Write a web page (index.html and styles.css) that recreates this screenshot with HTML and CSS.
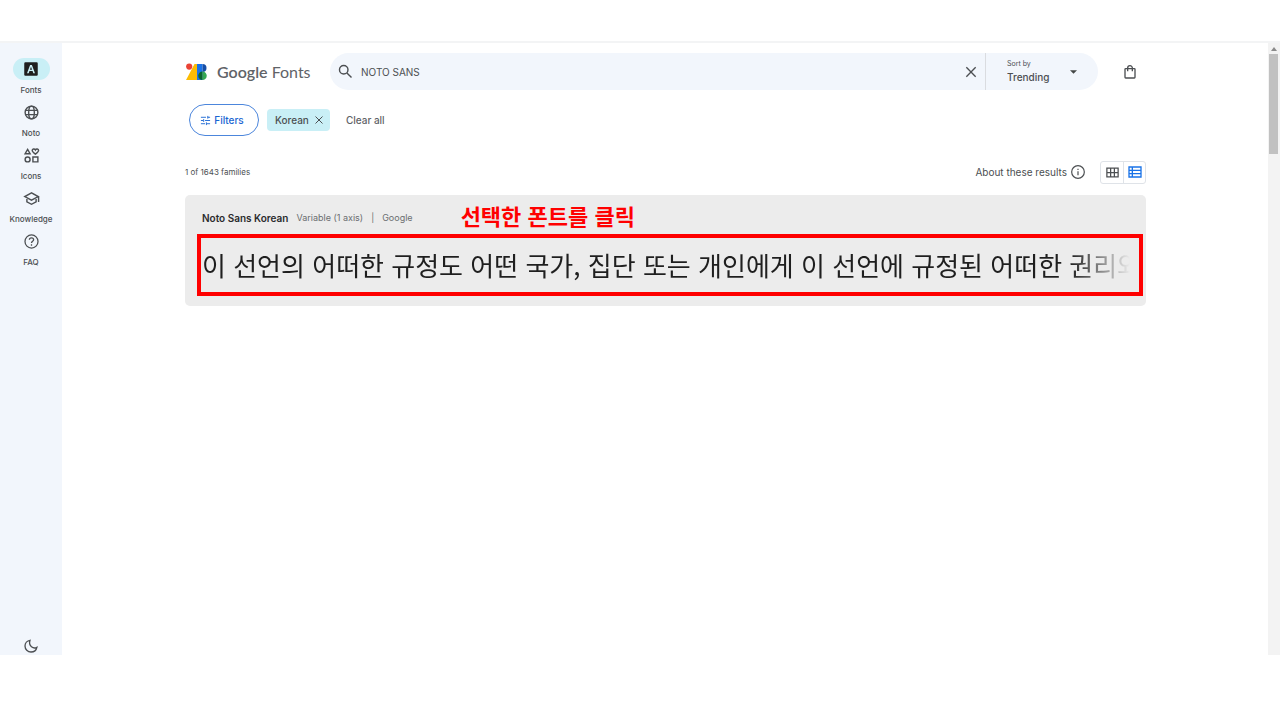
FILE: index.html
```html
<!DOCTYPE html>
<html lang="en">
<head>
<meta charset="UTF-8" />
<meta name="viewport" content="width=device-width, initial-scale=1" />
<title>Browse Fonts - Google Fonts</title>
<link rel="stylesheet" href="styles.css">
</head>
<body>

<div class="app">
  <nav class="sidebar" aria-label="Main">
    <a href="#fonts" class="nav-item active">
      <span class="nav-icon">
        <svg viewBox="0 0 24 24" width="18" height="18"><path fill="#1f1f1f" fill-rule="evenodd" d="M4.500 3h15A1.500 1.500 0 0 1 21 4.500v15a1.500 1.500 0 0 1-1.500 1.500h-15A1.500 1.500 0 0 1 3 19.500v-15A1.500 1.500 0 0 1 4.500 3zM6.700 17.500h2.200l1-2.800h4.200l1 2.800h2.200L13.200 6.500h-2.400zM10.600 12.900 12 8.900l1.400 4z"/></svg>
      </span>
      Fonts
    </a>
    <a href="#noto" class="nav-item">
      <span class="nav-icon">
        <svg class="line" viewBox="0 0 24 24" width="17" height="17"><circle cx="12" cy="12" r="9"/><ellipse cx="12" cy="12" rx="4" ry="9"/><path d="M3.500 9h17M3.500 15h17"/></svg>
      </span>
      Noto
    </a>
    <a href="#icons" class="nav-item">
      <span class="nav-icon">
        <svg class="line" viewBox="0 0 24 24" width="17" height="17"><path d="M6.500 3.500 10 9.500H3zM17.500 10c-3-2.300-4.500-3.600-4.500-5.200 0-2.300 3.300-2.900 4.500-.6 1.200-2.300 4.500-1.700 4.500.6 0 1.600-1.500 2.900-4.500 5.200z"/><circle cx="6.500" cy="17.500" r="3.500"/><path d="M14 14h7v7h-7z"/></svg>
      </span>
      Icons
    </a>
    <a href="#knowledge" class="nav-item">
      <span class="nav-icon">
        <svg class="line" viewBox="0 0 24 24" width="17" height="17"><path d="M12 4 2.500 9.200 12 14.400l9.500-5.200zM5.500 11v5.700L12 20.200l6.500-3.500V11M22 9v8"/></svg>
      </span>
      Knowledge
    </a>
    <a href="#faq" class="nav-item">
      <span class="nav-icon">
        <svg class="line thin" viewBox="0 0 24 24" width="17" height="17"><circle cx="12" cy="12" r="9.200"/><path d="M9 9.700c0-1.700 1.300-2.900 3-2.900s3 1.100 3 2.700c0 2.200-3 2.400-3 4.700M12 16v2"/></svg>
      </span>
      FAQ
    </a>
    <button type="button" class="theme-toggle" aria-label="Toggle dark mode">
      <svg class="line" viewBox="0 0 24 24" width="16" height="16"><path d="M10.500 3.500C6.300 4 3 7.500 3 12a9 9 0 0 0 9 9c4.300 0 8-3 8.800-7-4.800 2.800-13.300-1.500-10.300-10.500z"/></svg>
    </button>
  </nav>

  <main class="content">
    <header class="topbar">
      <a href="#home" class="logo">
        <svg viewBox="0 0 22 18" width="22" height="18">
          <path fill="#fbbc04" d="M8.500 1H12v16H0z"/>
          <circle cx="3.200" cy="3.600" r="3.100" fill="#ea4335"/>
          <path fill="#1a73e8" d="M11 1h5.500v16H11z"/>
          <path fill="#174ea6" d="M16.500 1a4 4 0 0 1 0 8z"/>
          <path fill="#34a853" d="M16.500 8.500a4.250 4.250 0 0 1 0 8.500z"/>
          <path fill="#0d652d" d="M16.500 8.500a4.250 4.250 0 0 0 0 8.500z"/>
        </svg>
        <span class="logo-text"><b>Google</b> Fonts</span>
      </a>
      <form class="search">
        <label for="query" aria-label="Search fonts">
          <svg class="line" viewBox="0 0 24 24" width="17" height="17"><circle cx="9.500" cy="9.500" r="6"/><path d="m14 14 6.500 6.500"/></svg>
        </label>
        <input type="text" id="query" value="NOTO SANS" />
        <button type="reset" class="clear-search" aria-label="Clear search">
          <svg class="line" viewBox="0 0 24 24" width="16" height="16"><path d="m5 5 14 14M19 5 5 19"/></svg>
        </button>
        <div class="sort">
          <label for="sort">Sort by</label>
          <select id="sort">
            <option>Trending</option>
            <option>Most popular</option>
            <option>Newest</option>
            <option>Name</option>
          </select>
          <svg class="caret" viewBox="0 0 8 4" width="7" height="4"><path fill="#444746" d="M0 0h8L4 4z"/></svg>
        </div>
      </form>
      <button type="button" class="bag" aria-label="View selected families">
        <svg class="line" viewBox="0 0 24 24" width="16" height="16"><path d="M5.500 7h13q1 0 1 1v12q0 1-1 1h-13q-1 0-1-1V8q0-1 1-1zM8.500 11V6a3.500 3.500 0 0 1 7 0v5"/></svg>
      </button>
    </header>

    <div class="filters">
      <button type="button" class="filters-btn">
        <svg class="line" viewBox="0 0 24 24" width="11" height="11"><path d="M2 5h11M17 5h5M17 2v6M2 12h5M11 12h11M8 9v6M2 19h9M15 19h7M14 16v6"/></svg>
        Filters
      </button>
      <button type="button" class="chip">
        Korean
        <svg class="line" viewBox="0 0 24 24" width="12" height="12"><path d="m5 5 14 14M19 5 5 19"/></svg>
      </button>
      <button type="button" class="clear-all">Clear all</button>
    </div>

    <div class="results-bar">
      <p class="count">1 of 1643 families</p>
      <a href="#about" class="about">
        About these results
        <svg class="line thin" viewBox="0 0 24 24" width="16" height="16"><circle cx="12" cy="12" r="9.500"/><path d="M12 11v6M12 7v2"/></svg>
      </a>
      <div class="view-toggle">
        <button type="button" aria-label="Grid view">
          <svg class="line" viewBox="0 0 24 24" width="15" height="15"><path d="M3 5h18v14H3zM3 12h18M9 5v14M15 5v14"/></svg>
        </button>
        <button type="button" class="selected" aria-label="List view">
          <svg class="line" viewBox="0 0 24 24" width="16" height="16"><path d="M3 4.500h18v15H3zM3 9.500h18M3 14.500h18M8 4.500v15"/></svg>
        </button>
      </div>
    </div>

    <article class="card">
      <div class="card-head">
        <h2>Noto Sans Korean</h2>
        <span>Variable (1 axis)</span>
        <span>|</span>
        <span>Google</span>
        <strong class="note" lang="ko">선택한 폰트를 클릭</strong>
      </div>
      <div class="sample-box">
        <p class="sample" lang="ko">이 선언의 어떠한 규정도 어떤 국가, 집단 또는 개인에게 이 선언에 규정된 어떠한 권리와</p>
      </div>
    </article>
  </main>

  <div class="scrollbar" aria-hidden="true">
    <svg viewBox="0 0 6 4" width="6" height="4"><path fill="#8a8a8a" d="M3 0l3 4H0z"/></svg>
    <div class="thumb"></div>
  </div>
</div>

</body>
</html>
```
FILE: styles.css
```css
* {
  box-sizing: border-box;
}
body {
  margin: 0;
  padding: 41px 0 65px;
  min-height: 100vh;
  display: flex;
  background: #fff;
  color: #4c4f52;
  font-family: Inter, "Noto Sans CJK KR", sans-serif;
  font-size: 10px;
  line-height: 16px;
}
a {
  color: inherit;
  text-decoration: none;
}
button, input, select {
  margin: 0;
  padding: 0;
  border: none;
  background: none;
  color: inherit;
  font: inherit;
}
button {
  display: flex;
  align-items: center;
  justify-content: center;
  cursor: pointer;
}
svg {
  display: block;
  flex: none;
}
.line {
  fill: none;
  stroke: currentColor;
  stroke-width: 2;
}
.thin {
  stroke-width: 1.8;
}
.app {
  flex: 1;
  min-width: 0;
  display: flex;
  border-top: 2px solid #f3f4f5;
}

/* sidebar */
.sidebar {
  flex: none;
  width: 62px;
  padding-top: 15px;
  display: flex;
  flex-direction: column;
  align-items: center;
  background: #f2f6fc;
}
.nav-item {
  height: 43px;
  display: flex;
  flex-direction: column;
  align-items: center;
  gap: 2px;
  font-size: 8px;
  font-weight: 500;
}
.nav-icon {
  width: 37px;
  height: 22px;
  display: flex;
  align-items: center;
  justify-content: center;
  border-radius: 11px;
}
.active .nav-icon {
  background: #c9eff6;
}
.theme-toggle {
  margin-top: auto;
  width: 24px;
  height: 18px;
}

/* top bar */
.content {
  flex: 1;
  min-width: 0;
  padding: 10px 122px 0 123px;
}
.topbar {
  display: flex;
  align-items: center;
}
.logo {
  width: 145px;
  padding-left: 1px;
  display: flex;
  align-items: center;
  gap: 9px;
}
.logo-text {
  color: #5f6368;
  font-family: Lato, sans-serif;
  font-size: 16px;
  line-height: 24px;
  white-space: nowrap;
}
.logo-text b {
  font-weight: 600;
}
.search {
  flex: 1;
  height: 37px;
  padding-left: 7px;
  display: flex;
  align-items: center;
  border-radius: 19px;
  background: #f2f6fc;
}
.search input {
  flex: 1;
  min-width: 0;
  margin-left: 7px;
  font-size: 10px;
  outline: none;
}
.clear-search {
  width: 29px;
  height: 37px;
}
.sort {
  position: relative;
  width: 113px;
  height: 37px;
  padding: 5px 20px 0 21px;
  display: flex;
  flex-direction: column;
  border-left: 1px solid #dadce0;
}
.sort label {
  font-size: 7px;
  line-height: 11px;
}
.sort select {
  appearance: none;
  font-weight: 500;
  line-height: 16px;
}
.caret {
  position: absolute;
  right: 21px;
  top: 17px;
  pointer-events: none;
}
.bag {
  width: 24px;
  height: 24px;
  margin: 0 4px 0 20px;
}

/* filters */
.filters {
  margin-top: 14px;
  padding-left: 4px;
  display: flex;
  align-items: center;
  font-weight: 500;
}
.filters-btn {
  width: 70px;
  height: 32px;
  padding-right: 4px;
  gap: 3px;
  border: 1px solid #4c86dc;
  border-radius: 16px;
  color: #1a66d2;
}
.chip {
  height: 22px;
  margin-left: 8px;
  padding: 0 5px 0 8px;
  gap: 4px;
  border-radius: 4px;
  background: #c9eff6;
}
.clear-all {
  margin-left: 16px;
  color: #5f6368;
}

/* results */
.results-bar {
  height: 24px;
  margin-top: 24px;
  display: flex;
  align-items: center;
}
.count {
  margin: 0 auto 0 0;
  font-size: 8px;
}
.about {
  display: flex;
  align-items: center;
  gap: 3px;
}
.view-toggle {
  margin-left: 14px;
  display: flex;
  border: 1px solid #dfe3e8;
  border-radius: 3px;
}
.view-toggle button {
  width: 22px;
  height: 21px;
}
.view-toggle .selected {
  border-left: 1px solid #dfe3e8;
  color: #1a73e8;
}

.card {
  margin-top: 11px;
  padding: 7px 3px 10px 12px;
  border-radius: 5px;
  background: #ececec;
}
.card-head {
  height: 32px;
  padding-left: 5px;
  display: flex;
  align-items: center;
  gap: 8px;
  color: #6b6e70;
  font-size: 9px;
}
.card-head h2 {
  margin: 0;
  color: #2a2b2c;
  font-size: 10px;
  font-weight: 600;
}
.note {
  align-self: flex-start;
  margin-left: 40px;
  color: #f00;
  font-family: "Noto Sans CJK KR", sans-serif;
  font-size: 22px;
  line-height: 26px;
}
.sample-box {
  height: 62px;
  padding: 0 9px 0 1px;
  border: 4px solid #f00;
}
.sample {
  margin: 0;
  overflow: hidden;
  color: #1f1f1f;
  font-family: "Noto Sans CJK KR", sans-serif;
  font-size: 26px;
  font-weight: 400;
  line-height: 54px;
  white-space: nowrap;
  mask-image: linear-gradient(to right, #000 calc(100% - 60px), transparent);
}

/* scrollbar */
.scrollbar {
  flex: none;
  width: 12px;
  padding: 4px 2px 0 1px;
  display: flex;
  flex-direction: column;
  align-items: center;
  gap: 3px;
  background: #f3f3f3;
}
.thumb {
  width: 100%;
  height: 100px;
  background: #c1c1c1;
}
```
